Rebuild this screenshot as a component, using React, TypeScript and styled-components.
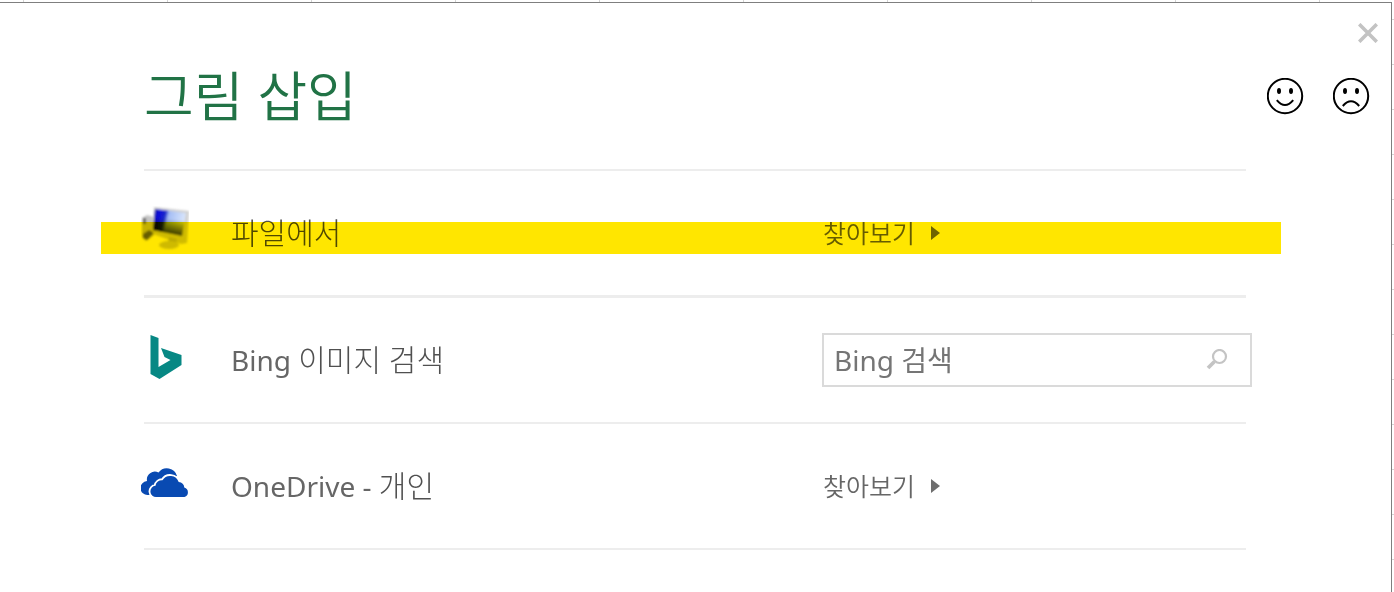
import React from "react";
import styled, { createGlobalStyle } from "styled-components";

const GlobalStyle = createGlobalStyle`
  *, *::before, *::after { box-sizing: border-box; }
  body { margin: 0; background: #fff; }
  button, input { font: inherit; color: inherit; }
`;

const Sheet = styled.div`
  min-height: 100vh;
  padding: 2px 2px 0 0;
  background-color: #fff;
  background-image:
    linear-gradient(90deg, #d4d4d4 1px, transparent 1px),
    linear-gradient(180deg, #d4d4d4 1px, transparent 1px);
  background-size: 144px 2px, 2px 45px;
  background-position: 23px 0, right 19px;
  background-repeat: repeat-x, repeat-y;
`;

const Dialog = styled.main`
  min-height: calc(100vh - 2px);
  border-top: 1px solid #7f7f7f;
  border-right: 1px solid #7f7f7f;
  background: #fff;
  color: #666;
  font-family: "Noto Sans", "Noto Sans CJK KR", sans-serif;
  font-size: 28px;
  font-weight: 400;
`;

const TopBar = styled.div`
  display: flex;
  justify-content: flex-end;
  padding: 20px 13px 0 0;
`;

const IconButton = styled.button<{ $size: number }>`
  display: block;
  width: ${(p) => p.$size}px;
  height: ${(p) => p.$size}px;
  padding: 0;
  border: 0;
  background: none;
  cursor: pointer;

  svg { display: block; width: 100%; height: 100%; }
`;

const Header = styled.header`
  display: flex;
  align-items: center;
  justify-content: space-between;
  height: 106px;
  padding: 0 21px 0 144px;
`;

const Title = styled.h1`
  margin: 0;
  color: #217346;
  font-size: 54px;
  font-weight: 350;
  line-height: 72px;
`;

const Faces = styled.div`
  display: flex;
  gap: 29px;
`;

const SourceList = styled.ul`
  margin: 20px 145px 0 144px;
  padding: 0;
  border-top: 2px solid #ededed;
  list-style: none;
`;

const Source = styled.li<{ $rule: number }>`
  position: relative;
  display: grid;
  grid-template-columns: 87px 1fr 424px;
  align-items: center;
  height: ${(p) => 124 + p.$rule}px;
  border-bottom: ${(p) => p.$rule}px solid #ededed;
`;

const SourceIcon = styled.span`
  width: 48px;
  margin: 0 0 6px -3px;

  svg { display: block; width: 48px; height: 48px; }
`;

const Label = styled.label`
  line-height: 40px;
`;

const Korean = styled.span`
  color: #505050;
  font-size: 30px;
  font-weight: 300;
`;

const Browse = styled.button`
  display: flex;
  align-items: center;
  gap: 16px;
  justify-self: start;
  padding: 0 0 0 1px;
  border: 0;
  background: none;
  font-size: 25px;
  font-weight: 350;
  line-height: 32px;
  cursor: pointer;
`;

const SearchBox = styled.form`
  display: flex;
  align-items: center;
  height: 54px;
  margin-right: -6px;
  padding: 0 22px 0 10px;
  border: 2px solid #dadada;
`;

const SearchInput = styled.input`
  flex: 1;
  min-width: 0;
  padding: 0;
  border: 0;
  outline: 0;
  background: none;
  color: #757575;
  line-height: 40px;

  &::placeholder { color: #757575; opacity: 1; }
`;

const Highlight = styled.span`
  position: absolute;
  top: 51px;
  left: -43px;
  right: -35px;
  height: 32px;
  background: #ffe600;
  mix-blend-mode: multiply;
  pointer-events: none;
`;

const Face = ({ sad = false }: { sad?: boolean }) => (
  <svg viewBox="0 0 37 37" fill="none" stroke="#000" strokeWidth="2" aria-hidden="true">
    <circle cx="18" cy="18" r="17.200" />
    <ellipse cx="12" cy="13" rx="2" ry="3" fill="#000" stroke="none" />
    <ellipse cx="24" cy="13" rx="2" ry="3" fill="#000" stroke="none" />
    <path d={sad ? "M9.800 28Q18 18.500 26.200 28" : "M9.800 22.200Q18 32 26.200 22.200"} />
  </svg>
);

const CloseIcon = () => (
  <svg viewBox="0 0 20 20" stroke="#c3c3c3" strokeWidth="3.6" aria-hidden="true">
    <path d="M1.2 1.2 18.8 18.8M18.8 1.2 1.2 18.8" />
  </svg>
);

const ComputerIcon = () => (
  <svg viewBox="0 0 48 48" aria-hidden="true">
    <defs>
      <linearGradient id="screen" x1="0" y1="0" x2="1" y2="0.2">
        <stop offset="0" stopColor="#14148c" />
        <stop offset=".2" stopColor="#0a0adc" />
        <stop offset=".4" stopColor="#1c2cc8" />
        <stop offset=".5" stopColor="#a4bdf4" />
        <stop offset="1" stopColor="#d9e6fc" />
      </linearGradient>
      <linearGradient id="shade" x1="0.15" y1="0" x2="0" y2="1">
        <stop offset=".3" stopColor="#101030" stopOpacity="0" />
        <stop offset="1" stopColor="#08081c" stopOpacity=".95" />
      </linearGradient>
      <filter id="soft" x="-10%" y="-10%" width="120%" height="120%">
        <feGaussianBlur stdDeviation=".8" />
      </filter>
    </defs>
    <g filter="url(#soft)">
      <path d="M1 12 6 9l7 2v18l-8 6-4-4z" fill="#c4c4c4" />
      <path d="M2 12h3v6H2zM2 28l6-4 5 3-7 7-4-2z" fill="#686868" />
      <path d="M13 1 48 5l-2 32-6 1-28-10z" fill="#d0d0d0" />
      <path d="M14 3 45 7l-4 23-29-6z" fill="url(#screen)" />
      <path d="M14 3 45 7l-4 23-29-6z" fill="url(#shade)" />
      <path d="m28 31 8 2-1 5h-8z" fill="#bbb" />
      <ellipse cx="28" cy="39" rx="10" ry="4" fill="#cfcfcf" />
    </g>
  </svg>
);

const BingIcon = () => (
  <svg viewBox="0 0 48 48" fill="#078884" aria-hidden="true">
    <path d="m9.500 2 8 3v29l12-7-6-3-3.5-9L40.500 22v10L18.500 46l-9-5z" />
  </svg>
);

const OneDriveIcon = () => (
  <svg viewBox="0 0 48 48" fill="#094ab2" aria-hidden="true">
    <path d="M12 36H7A7 7 0 0 1 6 22a8 8 0 0 1 11.500-8.500A10.500 10.500 0 0 1 36 17L26 21z" />
    <path
      d="M15.500 38a5.600 5.600 0 0 1-1-11.200 6.500 6.500 0 0 1 7-5.600 9 9 0 0 1 16.200 1.800 6.200 6.200 0 0 1 5.600 5.600 4.900 4.900 0 0 1 .2 9.400z"
      stroke="#fff"
      strokeWidth="3.600"
      paintOrder="stroke"
    />
  </svg>
);

const SearchIcon = () => (
  <svg viewBox="0 0 22 22" fill="none" stroke="#c4c4c4" aria-hidden="true">
    <circle cx="13.500" cy="7.500" r="6.500" strokeWidth="2.200" />
    <path d="m8.500 12.500-6.500 6.500" strokeWidth="3.800" />
  </svg>
);

const Arrow = () => (
  <svg width="9" height="14" viewBox="0 0 9 14" fill="#6e6e6e" aria-hidden="true">
    <path d="M0 0 9 7 0 14z" />
  </svg>
);

export default function App() {
  return (
    <>
      <GlobalStyle />
      <Sheet>
        <Dialog>
          <TopBar>
            <IconButton $size={20} aria-label="닫기"><CloseIcon /></IconButton>
          </TopBar>
          <Header>
            <Title>그림 삽입</Title>
            <Faces>
              <IconButton $size={37} aria-label="만족"><Face /></IconButton>
              <IconButton $size={37} aria-label="불만족"><Face sad /></IconButton>
            </Faces>
          </Header>
          <SourceList>
            <Source $rule={3}>
              <SourceIcon><ComputerIcon /></SourceIcon>
              <Label htmlFor="browse-file"><Korean>파일에서</Korean></Label>
              <Browse id="browse-file" type="button">찾아보기<Arrow /></Browse>
              <Highlight />
            </Source>
            <Source $rule={2}>
              <SourceIcon><BingIcon /></SourceIcon>
              <Label htmlFor="bing-search">Bing <Korean>이미지 검색</Korean></Label>
              <SearchBox onSubmit={(e) => e.preventDefault()}>
                <SearchInput id="bing-search" type="text" placeholder="Bing 검색" />
                <IconButton $size={22} aria-label="검색"><SearchIcon /></IconButton>
              </SearchBox>
            </Source>
            <Source $rule={2}>
              <SourceIcon><OneDriveIcon /></SourceIcon>
              <Label htmlFor="browse-onedrive">OneDrive - <Korean>개인</Korean></Label>
              <Browse id="browse-onedrive" type="button">찾아보기<Arrow /></Browse>
            </Source>
          </SourceList>
        </Dialog>
      </Sheet>
    </>
  );
}
